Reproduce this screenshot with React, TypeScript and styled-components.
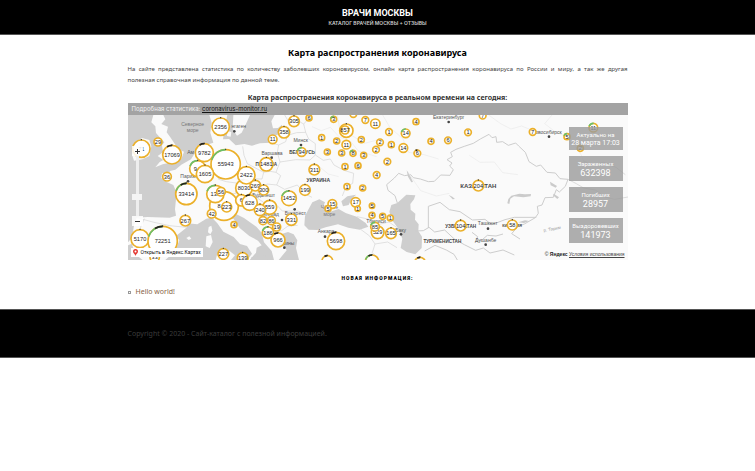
import React, { useState } from "react";
import styled, { createGlobalStyle } from "styled-components";

const GlobalStyle = createGlobalStyle`
  *, *::before { box-sizing: border-box; }
  body {
    margin: 0;
    background: #fff;
    color: #444;
    font-family: "Noto Sans", "Open Sans", sans-serif;
    font-size: 6px;
    line-height: 11px;
  }
`;

const Header = styled.header`
  padding: 7px 16px;
  background: #000;
  text-align: center;
  border-bottom: 1px solid #555;
`;

const SiteTitle = styled.h1`
  margin: 0;
  color: #fff;
  font-family: Roboto, sans-serif;
  font-size: 9px;
  line-height: 12px;
  font-weight: 700;
`;

const Tagline = styled.p`
  margin: 0;
  color: #ccc;
  font-family: Inter, Roboto, sans-serif;
  font-size: 5px;
  line-height: 8px;
  font-weight: 600;
`;

const Column = styled.div`
  width: 100%;
  max-width: 500px;
  margin: 0 auto;
`;

const Main = styled(Column).attrs({ as: "main" })`
  padding: 12px 0 11px;
`;

const PageTitle = styled.h2`
  margin: 0 0 5px;
  color: #000;
  font-size: 9px;
  line-height: 12px;
  text-align: center;
`;

const Intro = styled.p`
  margin: 0 0 6px;
  text-align: justify;
`;

const MapTitle = styled.h3`
  margin: 0;
  color: #333;
  font-size: 7px;
  line-height: 11px;
  text-align: center;
`;

const MapBar = styled.div`
  padding: 0 4px;
  background: #a3a3a3;
  color: #f4f4f4;
  font-family: Inter, Roboto, sans-serif;
  font-size: 6px;
  line-height: 12px;
`;

const BarLink = styled.a`
  color: #111;
`;

const MapFrame = styled.div`
  position: relative;
  overflow: hidden;
`;

const MapDrawing = styled.svg`
  display: block;
  width: 100%;
  height: auto;
  font-family: "Liberation Sans", Arial, sans-serif;
`;

const Stats = styled.dl`
  position: absolute;
  top: 12px;
  right: 5px;
  display: flex;
  flex-direction: column;
  gap: 6px;
  width: 54px;
  margin: 0;
`;

const Stat = styled.div`
  padding: 3px 0;
  background: rgba(155, 155, 155, 0.8);
  color: #fff;
  text-align: center;
  font-family: Roboto, sans-serif;
`;

const StatLabel = styled.dt`
  font-size: 6px;
  line-height: 9px;
  white-space: nowrap;
`;

const StatValue = styled.dd<{ $small?: boolean }>`
  margin: 0;
  font-size: ${(p) => (p.$small ? 7 : 9)}px;
  line-height: ${(p) => (p.$small ? 8 : 10)}px;
`;

const ZoomControls = styled.div`
  position: absolute;
  top: 31px;
  left: 4px;
  display: flex;
  flex-direction: column;
  align-items: center;
  width: 11px;
`;

const ZoomButton = styled.button`
  display: grid;
  place-items: center;
  width: 11px;
  height: 10px;
  padding: 0;
  border: 0;
  background: rgba(255, 255, 255, 0.85);
  color: #333;
`;

const ZoomSlider = styled.input`
  appearance: none;
  writing-mode: vertical-lr;
  direction: rtl;
  width: 10px;
  height: 60px;
  margin: 0;
  background: linear-gradient(#eee, #eee) center / 3px 100% no-repeat;
  &::-webkit-slider-thumb {
    appearance: none;
    width: 10px;
    height: 6px;
    border: 0;
    background: #f4f4f4;
  }
`;

const YandexLink = styled.a`
  position: absolute;
  left: 3px;
  bottom: 3px;
  display: flex;
  align-items: center;
  gap: 3px;
  padding: 0 2px;
  background: #fff;
  color: #111;
  font-family: Roboto, sans-serif;
  font-size: 5px;
  line-height: 9px;
  text-decoration: none;
`;

const MapCredit = styled.p`
  position: absolute;
  right: 3px;
  bottom: 2px;
  margin: 0;
  color: #222;
  font-family: "Liberation Sans", sans-serif;
  font-size: 5px;
  line-height: 8px;
`;

const CreditLink = styled.a`
  color: #444;
`;

const NewsTitle = styled.h4`
  margin: 13px 0 2px;
  color: #000;
  font-family: Roboto, sans-serif;
  font-size: 5px;
  line-height: 11px;
  font-weight: 900;
  letter-spacing: 1px;
  text-align: center;
`;

const NewsList = styled.ul`
  margin: 0;
  padding: 0;
  list-style: none;
`;

const NewsItem = styled.li`
  display: flex;
  align-items: center;
  font-size: 7px;
  line-height: 12px;
  &::before {
    content: "";
    width: 3px;
    height: 3px;
    margin-right: 5px;
    border: 1px solid #999;
  }
`;

const NewsLink = styled.a`
  color: #86623f;
  text-decoration: none;
`;

const Footer = styled.footer`
  padding: 18px 0;
  background: #000;
  border: 1px solid #555;
  border-width: 1px 0;
`;

const Copyright = styled(Column)`
  color: #3c3c3c;
  font-size: 7px;
  line-height: 11px;
`;

type Marker = [x: number, y: number, r: number, value: string, arc?: number];

const markers: Marker[] = [
  [46, 140, 28, "71", 0], [96, 120, 14, "29"], [138, 158, 30, "17069", 1], [284, 74, 28, "2356"],
  [123, 224, 15, "36"], [181, 276, 34, "33414", 3], [178, 356, 18, "267"], [42, 410, 29, "5170"],
  [110, 417, 46, "72251", 3], [86, 466, 16, ""], [292, 456, 18, "227"], [350, 468, 18, "139"],
  [294, 312, 45, "", 1], [235, 152, 29, "9782", 1], [215, 200, 26, "", 2], [299, 187, 46, "55943", 2],
  [237, 216, 28, "1605"], [354, 258, 27, "8030", 1], [361, 220, 28, "2422"], [268, 276, 28, "133", 2],
  [285, 269, 15, "56"], [302, 315, 17, "223"], [257, 335, 15, "42"], [324, 368, 11, "4"],
  [388, 251, 18, "269"], [413, 264, 17, "300"], [346, 295, 19, "6"], [371, 302, 25, "628", 1],
  [431, 316, 23, "559"], [402, 324, 19, "240"], [411, 356, 14, "82"], [436, 356, 14, "86"],
  [452, 375, 14, "19"], [426, 392, 19, "186", 2], [456, 414, 23, "966", 1], [496, 353, 19, "331"],
  [489, 289, 24, "1452", 2], [537, 264, 18, "199"], [421, 187, 22, "1481"], [527, 150, 15, "94", 2],
  [565, 203, 18, "311"], [440, 112, 15, "11"], [474, 91, 19, "358"], [504, 58, 18, "305"],
  [549, 48, 11, "6"], [623, 52, 11, "3", 2], [682, 36, 12, ""], [718, 54, 12, "7"],
  [587, 107, 11, "1"], [632, 117, 11, "2"], [661, 128, 15, "11"], [706, 113, 11, "2"],
  [604, 150, 11, "3"], [647, 153, 11, "3"], [681, 154, 11, "8", 2], [713, 160, 11, "3"],
  [661, 86, 22, ""], [657, 84, 14, "857"], [657, 194, 11, "1"], [696, 191, 11, "6"],
  [663, 254, 11, "1"], [710, 258, 11, "2"], [619, 306, 15, "15"], [606, 320, 11, "5"],
  [689, 301, 16, "17"], [695, 320, 10, "1"], [738, 311, 10, "5"], [738, 340, 11, "4"],
  [630, 417, 28, "5698", 1], [604, 477, 18, "", 1], [738, 479, 22, "", 3],
  [748, 65, 16, "11"], [789, 90, 12, "1"], [839, 94, 15, "14", 2], [870, 59, 11, "4"],
  [762, 121, 12, "2"], [796, 128, 11, "1"], [832, 138, 15, "14"], [874, 154, 12, "6", 1],
  [784, 179, 12, "2"], [915, 118, 11, "4"], [966, 115, 12, "6"], [1026, 91, 12, "1"],
  [1070, 41, 12, "7"], [750, 143, 12, "2"], [752, 219, 12, "4"], [1057, 251, 18, "204"],
  [1004, 371, 18, "104"], [1159, 369, 17, "58"], [770, 343, 11, "5"], [793, 348, 11, "1"],
  [755, 391, 21, "529", 1], [747, 374, 15, "85", 2], [795, 394, 18, "165"],
  [1220, 90, 12, "7"], [1323, 104, 11, "5", 2], [1402, 77, 15, "11", 2], [1363, 139, 11, "2"],
  [882, 482, 18, "", 1],
];

type Place = [x: number, y: number, name: string, kind: "city" | "country" | "sea", size?: number];

const places: Place[] = [
  [200, 73, "Северное", "sea"], [200, 90, "море", "sea"], [610, 322, "Чёрное", "sea"], [610, 343, "море", "sea"],
  [338, 78, "нгаген", "city"], [194, 155, "Ам", "city"], [186, 229, "Париж", "city"],
  [438, 158, "Варшава", "city"], [524, 121, "Минск", "city"], [413, 284, "Будапешт", "city"],
  [508, 340, "Бухарест", "city"], [430, 342, "Белград", "city"], [600, 394, "Анкара", "city"],
  [750, 362, "Тбилиси", "city"], [824, 389, "Баку", "city"], [968, 50, "Екатеринбург", "city"],
  [1262, 95, "Новосибирск", "city"], [1085, 370, "Ташкент", "city"], [1079, 419, "Душанбе", "city"],
  [480, 429, "Афины", "city"],
  [421, 193, "ПОЛЬША", "country", 14], [528, 157, "БЕЛАРУСЬ", "country", 14], [577, 239, "УКРАИНА", "country"],
  [1004, 377, "УЗБЕКИСТАН", "country", 14], [949, 422, "ТУРКМЕНИСТАН", "country", 14],
  [1158, 374, "КИРГИЗИЯ", "country", 11], [1057, 257, "КАЗАХСТАН", "country", 18],
];

const dots = [
  [325, 88], [186, 238], [437, 167], [525, 129], [506, 322], [468, 354], [597, 404], [475, 437],
  [825, 397], [968, 60], [1269, 104], [1086, 380], [1079, 428],
];

function CoronaMap() {
  return (
    <MapDrawing viewBox="6 39 1500 435" role="img" aria-label="Карта заболевших">
      <rect x="6" y="39" width="1500" height="435" fill="#fafafa" />
      <g fill="#cecece">
        <path d="M6 39H250L257 62 253 92 262 122 238 130 212 145 195 172 166 188 148 203 132 207 128 216 108 214 106 228 122 240 142 249 152 272 147 322 150 341 131 347 64 345 32 347 24 370 18 407 6 421Z" />
        <path d="M304 39 322 39 320 82 333 101 347 92 358 70 372 39H446L436 58 441 79 456 78 468 68 470 92 447 101 434 122 402 124 378 131 355 126 329 130 309 111 291 112 295 84Z" />
        <path d="M118 474 148 447 160 415 150 402 181 377 185 364 214 367 241 350 258 347 274 364 292 389 323 405 342 426 363 432 378 455 364 474Z" />
        <path d="M301 325 312 318 330 336 354 348 391 374 407 392 414 421 437 447 444 474H371L390 452 392 437 407 430 396 416 370 402 341 378 323 351 304 342Z" />
        <path d="M458 474 482 445 469 425 464 397 486 390 503 397 514 415 510 438 519 474Z" />
        <path d="M535 370 537 342 548 321 559 301 580 292 597 301 591 316 612 329 638 321 659 333 692 344 719 363 727 374 701 383 667 377 636 367 599 376 574 384 548 383Z" />
        <path d="M646 298 664 283 690 278 675 294 668 309 651 313Z" />
        <path d="M814 303 841 278 868 280 864 292 853 306 854 323 868 335 867 353 878 367 877 387 888 404 887 438 868 457 842 450 824 438 829 410 816 379 798 354 790 329 796 309Z" />
        <path d="M376 466 415 459 428 474H376Z" />
        <path d="M6 430 18 425 26 455 50 474H6Z" />
      </g>
      <g fill="#fafafa">
        <path d="M82 39H112L118 52 106 66 126 74 122 91 134 107 147 127 156 142 174 149 166 171 151 179 131 182 110 187 88 196 101 180 112 174 95 162 111 151 108 130 115 121 103 108 90 93 88 73 76 61Z" />
        <path d="M48 108 70 114 76 133 70 162 49 172 24 176 18 158 30 146 24 126Z" />
        <path d="M248 375 256 371 259 386 253 397 246 391Z" />
        <path d="M241 403 255 399 260 420 251 438 239 433Z" />
        <path d="M269 474 274 455 310 446 327 460 315 474Z" />
        <path d="M181 408 190 403 196 410 188 414Z" />
        <path d="M303 87 316 90 314 104 303 102Z" />
      </g>
      <g fill="none" stroke="#d3d3d3" strokeWidth="2">
        <path d="M350 133 354 160 364 185 394 201 413 211 432 208 450 211 462 180 454 151 458 129 434 122M458 129 479 119 484 100 512 92 539 91 548 111 568 125 568 159 552 174 509 173 462 180" />
        <path d="M568 159 592 175 613 171 624 189 654 205 683 214 680 244 659 256 649 282M450 211 464 221 452 249 476 262 514 249 537 276 558 286M413 211 408 231 368 230 331 243 301 239 278 232 273 205 259 190 222 207 205 190M452 249 423 246 397 264 394 288 421 307 452 309 469 327 516 327 539 337M250 132 251 160 258 190M331 243 330 274 306 277 272 276 254 297 255 339M32 347 84 361 131 371 181 376M55 350 44 375 39 439M402 324 424 345 435 371 467 386 486 372 515 370M414 392 443 388 463 387M693 344 730 352 760 367 789 360 816 379M704 382 731 402 747 426 739 452 760 474M747 426 785 420 813 437M476 39 488 59 510 53 533 66 539 91M533 66 558 39" />
      </g>
      <g fill="none" stroke="#cdcdcd" strokeWidth="3" strokeLinejoin="round">
        <path d="M814 303 807 281 786 265 782 248 805 228 818 214 836 221 854 218 862 227 883 231 907 239 925 238 944 219 972 220 982 203 971 192 978 183 963 173 979 164 974 151 990 142 1015 133 1042 124 1063 111 1089 97 1098 107 1110 104 1112 121 1130 119 1147 130 1169 123 1178 132 1198 151 1209 179 1231 193 1244 189 1263 211 1288 213 1302 230 1326 232 1318 253 1300 270 1291 263 1282 286 1257 287 1248 309 1234 313 1237 334 1228 347 1195 366 1175 374 1157 395 1182 411M907 378V313L942 301 970 323 1002 329 1039 354 1077 352 1097 368 1108 364 1137 353 1165 346 1231 346M867 387 892 386 909 376 926 390 956 384 985 411 1015 428 1049 445 1072 438 1092 453 1131 444 1165 459M896 447 927 430 961 444 984 457 994 474M1038 391 1055 404 1049 419 1069 413 1084 400 1110 402 1131 396" />
        <path d="M1326 232 1351 245 1373 258 1408 264 1437 285 1466 292 1506 285M1372 176 1398 190 1432 181 1470 196 1498 218" strokeWidth="2" />
      </g>
      <g fill="#cbcbcb">
        <path d="M842 205 850 216 861 240 856 241 846 224ZM968 279 979 284 987 291 980 292ZM1144 304 1147 291 1156 281 1180 275 1197 277 1215 276 1214 283 1192 286 1164 283 1153 290 1150 306ZM1272 239 1293 252 1289 257 1274 250ZM1283 275 1299 286 1294 291 1281 280ZM1177 361 1197 355 1209 357 1194 363Z" />
      </g>
      <g fill="none" stroke="#eaeaea" strokeWidth="2">
        <path d="M558 74 586 86 613 76 640 105 674 118 696 146 752 164M579 193 607 216 638 224M634 39 640 75 678 101 716 124 765 111M770 39 791 75 831 111 848 151 894 158 938 171M1088 39 1124 65 1155 81 1187 72 1219 85M848 214 884 266 931 282 970 274M1030 160 1062 181 1105 180 1130 212 1176 218M1278 39 1256 65 1287 89 1332 109 1365 158 1392 220" />
      </g>

      <g fill="#444">
        {dots.map(([x, y]) => (
          <circle key={`${x}-${y}`} cx={x} cy={y} r="4" />
        ))}
      </g>
      <g textAnchor="middle">
        {places.map(([x, y, name, kind, size = 15]) => (
          <text
            key={name + y}
            x={x}
            y={y}
            fontSize={size}
            fontWeight={kind === "country" ? 700 : 400}
            fill={kind === "country" ? "#444" : kind === "sea" ? "#777" : "#555"}
          >
            {name}
          </text>
        ))}
        <text x="1279" y="385" fontSize="13" fill="#999" transform="rotate(-10 1279 385)">р. Тарим</text>
      </g>

      <g textAnchor="middle">
        {markers.map(([x, y, r, value, arc = 0]) => (
          <g key={`${x}-${y}`} transform={`translate(${x} ${y})`}>
            <circle r={r - 2} fill="#fff" fillOpacity="0.95" stroke="#ebb02a" strokeWidth="5" />
            {arc >= 2 && (
              <circle
                r={r - 2}
                fill="none"
                stroke="#69bf6b"
                strokeWidth="5"
                pathLength="100"
                strokeDasharray="20 80"
                transform="rotate(-162)"
              />
            )}
            {(arc === 1 || arc === 3) && (
              <circle
                r={r - 2}
                fill="none"
                stroke="#222"
                strokeWidth="5"
                pathLength="100"
                strokeDasharray="9 91"
                transform="rotate(-122)"
              />
            )}
            {r > 16 && <circle cy={1 - r} r="2" fill="#333" />}
            {value && <text y="6" fontSize="17" fill="#222">{value}</text>}
          </g>
        ))}
        <g fontSize="17" fill="#222">
          <text x="208" y="206">9</text>
          <text x="279" y="318">8</text>
          <text x="86" y="472">33</text>
        </g>
      </g>
    </MapDrawing>
  );
}

const stats = [
  { label: "Актуально на", value: "28 марта 17:03", small: true },
  { label: "Зараженных", value: "632398" },
  { label: "Погибших", value: "28957" },
  { label: "Выздоровевших", value: "141973" },
];

export default function App() {
  const [zoom, setZoom] = useState(3);

  return (
    <>
      <GlobalStyle />
      <Header>
        <SiteTitle>ВРАЧИ МОСКВЫ</SiteTitle>
        <Tagline>КАТАЛОГ ВРАЧЕЙ МОСКВЫ + ОТЗЫВЫ</Tagline>
      </Header>
      <Main>
        <PageTitle>Карта распространения коронавируса</PageTitle>
        <Intro>
          На сайте представлена статистика по количеству заболевших короновирусом, онлайн карта распространения
          коронавируса по России и миру, а так же другая полезная&nbsp;справочная информация по данной теме.
        </Intro>
        <MapTitle>Карта распространения коронавируса в реальном времени на сегодня:</MapTitle>
        <MapBar>
          Подробная статистика: <BarLink href="#monitor">coronavirus-monitor.ru</BarLink>
        </MapBar>
        <MapFrame>
          <CoronaMap />
          <ZoomControls>
            <ZoomButton type="button" aria-label="Приблизить" onClick={() => setZoom(Math.min(10, zoom + 1))}>
              <svg width="7" height="7" viewBox="0 0 7 7" stroke="currentColor" strokeWidth="1">
                <path d="M1 3.5H6M3.5 1V6" />
              </svg>
            </ZoomButton>
            <ZoomSlider
              type="range"
              min={0}
              max={10}
              value={zoom}
              aria-label="Масштаб"
              onChange={(e) => setZoom(Number(e.target.value))}
            />
            <ZoomButton type="button" aria-label="Отдалить" onClick={() => setZoom(Math.max(0, zoom - 1))}>
              <svg width="7" height="7" viewBox="0 0 7 7" stroke="currentColor" strokeWidth="1">
                <path d="M1 3.5H6" />
              </svg>
            </ZoomButton>
          </ZoomControls>
          <Stats>
            {stats.map((s) => (
              <Stat key={s.label}>
                <StatLabel>{s.label}</StatLabel>
                <StatValue $small={s.small}>{s.value}</StatValue>
              </Stat>
            ))}
          </Stats>
          <YandexLink href="#maps">
            <svg width="5" height="7" viewBox="0 0 10 14">
              <path d="M5 14C4.500 10 0 9 0 5A5 5 0 0 1 10 5C10 9 5.500 10 5 14Z" fill="#e43b35" />
              <circle cx="5" cy="5" r="2" fill="#fff" />
            </svg>
            Открыть в Яндекс.Картах
          </YandexLink>
          <MapCredit>
            © <b>Яндекс</b> <CreditLink href="#terms">Условия использования</CreditLink>
          </MapCredit>
        </MapFrame>
        <NewsTitle>НОВАЯ ИНФОРМАЦИЯ:</NewsTitle>
        <NewsList>
          <NewsItem>
            <NewsLink href="#hello-world">Hello world!</NewsLink>
          </NewsItem>
        </NewsList>
      </Main>
      <Footer>
        <Copyright>Copyright © 2020 - Сайт-каталог с полезной информацией.</Copyright>
      </Footer>
    </>
  );
}
